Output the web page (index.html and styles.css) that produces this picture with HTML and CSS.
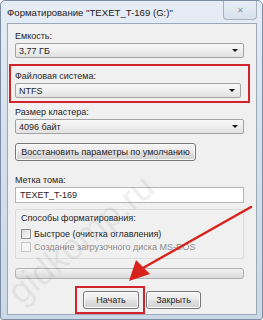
FILE: index.html
```html
<!DOCTYPE html>
<html>
<head>
<meta charset="utf-8">
<link rel="stylesheet" href="styles.css">
</head>
<body>
<div class="window">
  <div class="titlebar">
    <span class="title">Форматирование "TEXET_T-169 (G:)"</span>
    <span class="close">✕</span>
  </div>
  <div class="panel">
    <div class="field">
      <div class="label">Емкость:</div>
      <div class="combo"><span>3,77 ГБ</span><span class="arrow"></span></div>
    </div>
    <div class="field highlight">
      <div class="label">Файловая система:</div>
      <div class="combo"><span>NTFS</span><span class="arrow"></span></div>
    </div>
    <div class="field">
      <div class="label">Размер кластера:</div>
      <div class="combo"><span>4096 байт</span><span class="arrow"></span></div>
    </div>
    <div class="btn restore">Восстановить параметры по умолчанию</div>
    <div class="field vol">
      <div class="label">Метка тома:</div>
      <div class="input">TEXET_T-169</div>
    </div>
    <div class="group">
      <div class="label">Способы форматирования:</div>
      <div class="check"><span class="box"></span>Быстрое (очистка оглавления)</div>
      <div class="check disabled"><span class="box"></span>Создание загрузочного диска MS-DOS</div>
    </div>
    <div class="progress"></div>
    <div class="actions">
      <div class="mark"><div class="btn">Начать</div></div>
      <div class="btn">Закрыть</div>
    </div>
  </div>
  <div class="watermark">gidkomp.ru</div>
  <svg class="pointer" width="263" height="320" viewBox="0 0 263 320">
    <line x1="251" y1="207" x2="143" y2="268" stroke="#d8231c" stroke-width="2.5" stroke-linecap="round"/>
    <polygon points="129,281 136,260 150,274" fill="#d8231c"/>
  </svg>
</div>
</body>
</html>
```
FILE: styles.css
```css
* { box-sizing: border-box; }
html, body { margin: 0; padding: 0; }
body {
  width: 263px;
  height: 320px;
  overflow: hidden;
  background: #fff;
  font-family: "Liberation Sans", Arial, sans-serif;
  font-size: 9px;
  color: #262626;
}
.window {
  position: relative;
  width: 263px;
  height: 320px;
  background: linear-gradient(180deg, #e6edf6 0%, #d6e1ed 40%, #cbd8e7 100%);
  border: 1px solid #7d8ea4;
  border-radius: 5px 5px 3px 3px;
  padding: 0 5px 5px 6px;
}
.titlebar {
  height: 22px;
  display: flex;
  align-items: center;
  justify-content: space-between;
}
.title {
  font-size: 9.6px;
  color: #222;
}
.close {
  width: 34px;
  height: 19px;
  margin-top: -3px;
  border: 1px solid #a7b2c0;
  border-top: none;
  border-radius: 0 0 4px 4px;
  background: linear-gradient(180deg, #e8eef6, #d8e1ec);
  color: #8a94a1;
  font-size: 8px;
  display: flex;
  align-items: center;
  justify-content: center;
}
.panel {
  height: 292px;
  background: #f0f0f0;
  border: 1px solid #9aa8ba;
  padding: 6px 3px 0 1px;
  display: flex;
  flex-direction: column;
}
.field { padding: 0 9px 0 6px; }
.label { height: 12px; line-height: 12px; margin-bottom: 1px; }
.combo {
  height: 15px;
  border: 1px solid #a3a3a3;
  border-radius: 2px;
  background: linear-gradient(180deg, #f8f8f8 0%, #eeeeee 50%, #e2e2e2 100%);
  display: flex;
  align-items: center;
  justify-content: space-between;
  padding: 0 5px 0 3px;
}
.arrow {
  width: 0; height: 0;
  border-left: 3px solid transparent;
  border-right: 3px solid transparent;
  border-top: 3px solid #111;
}
.highlight {
  margin-top: 6px;
  border: 2px solid #d2232a;
  padding: 4px 7px 3px 4px;
  margin-right: 3px;
}
.highlight + .field { margin-top: 3px; }
.btn {
  height: 18px;
  border: 1px solid #777;
  border-radius: 3px;
  background: linear-gradient(180deg, #f4f4f4 0%, #ececec 45%, #dfdfdf 55%, #d2d2d2 100%);
  display: flex;
  align-items: center;
  justify-content: center;
  box-shadow: inset 0 0 0 1px #fcfcfc;
}
.restore {
  margin: 9px 0 0 6px;
  width: 181px;
}
.vol { margin-top: 13px; }
.input {
  height: 16px;
  border: 1px solid #b3b5ba;
  background: #fff;
  padding: 0 4px;
  line-height: 14px;
}
.group {
  margin: 6px 9px 0 6px;
  height: 52px;
  border: 1px solid #dcdcdc;
  border-radius: 2px;
  padding: 2px 0 0 5px;
}
.group .label { margin-bottom: 4px; }
.check {
  display: flex;
  align-items: center;
  height: 13px;
}
.box {
  width: 10px; height: 10px;
  border: 1px solid #8e8f8f;
  background: linear-gradient(135deg, #dcdcdc, #f8f8f8);
  margin-right: 3px;
}
.disabled { color: #8d8d8d; }
.disabled .box { border-color: #c5c5c5; background: #f4f4f4; }
.progress {
  margin: 9px 9px 0 6px;
  height: 11px;
  border: 1px solid #b2b2b2;
  border-radius: 3px;
  background: linear-gradient(180deg, #f2f2f2, #dadada);
}
.actions {
  margin-top: 7px;
  display: flex;
  align-items: center;
  padding-left: 66px;
}
.mark {
  border: 2px solid #d2232a;
  padding: 3px 4px 3px 6px;
}
.mark .btn { width: 56px; }
.actions > .btn { width: 55px; margin-left: 1px; }
.watermark {
  position: absolute;
  left: 24px;
  top: 272px;
  height: 38px;
  line-height: 38px;
  font-size: 36px;
  color: rgba(120,120,120,0.12);
  transform: rotate(-40deg);
  transform-origin: left bottom;
  pointer-events: none;
  white-space: nowrap;
}
.pointer { position: absolute; left: -1px; top: -1px; }
```
